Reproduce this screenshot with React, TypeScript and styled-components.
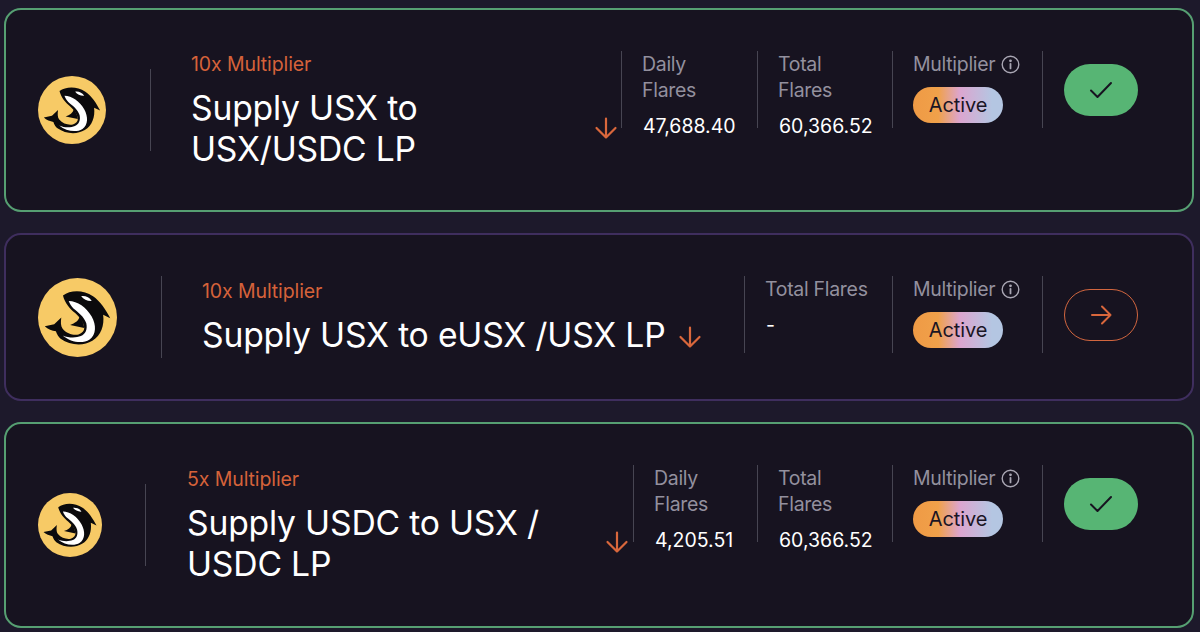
import React from "react";
import styled, { createGlobalStyle } from "styled-components";

const Global = createGlobalStyle`
  html, body { margin: 0; padding: 0; background: #1d192b; }
  body { font-family: Inter, "Liberation Sans", sans-serif; width: 1200px; height: 632px; overflow: hidden; }
`;

const Page = styled.div`
  display: flex;
  flex-direction: column;
  gap: 21px;
  padding: 8px 6px 0 4px;
`;

const Card = styled.section<{ $active: boolean; $height: number }>`
  box-sizing: border-box;
  height: ${(p) => p.$height}px;
  display: flex;
  align-items: center;
  background: #171320;
  border: 2px solid ${(p) => (p.$active ? "#569f72" : "#3f2e5e")};
  border-radius: 17px;
  padding-left: 32px;
`;

const LogoBox = styled.div<{ $width: number }>`
  flex: none;
  width: ${(p) => p.$width}px;
`;

const LogoSvg = styled.svg`
  display: block;
`;

const LeftRule = styled.div`
  flex: none;
  width: 1px;
  height: 82px;
  margin: 0 40px 0 43px;
  background: #474552;
`;

const TitleBlock = styled.div<{ $width: number; $nudge: number }>`
  flex: none;
  box-sizing: border-box;
  width: ${(p) => p.$width}px;
  padding-left: ${(p) => p.$nudge}px;
`;

const Tag = styled.div`
  color: #d5623a;
  font-size: 19.5px;
  line-height: 24px;
  letter-spacing: -0.1px;
  margin-bottom: 11px;
`;

const Title = styled.div`
  color: #fff;
  font-size: 33.7px;
  line-height: 41px;
  letter-spacing: -0.2px;
`;

const ArrowWrap = styled.div<{ $drop: number }>`
  flex: none;
  color: #d9673c;
  margin-top: ${(p) => p.$drop}px;
  display: flex;
`;

const Stats = styled.div`
  margin-left: auto;
  align-self: flex-start;
  margin-top: 41px;
  display: flex;
`;

const Cell = styled.div<{ $width: number }>`
  box-sizing: border-box;
  width: ${(p) => p.$width}px;
  height: 77px;
  border-left: 1px solid #474552;
  padding-left: 20px;
`;

const Label = styled.div`
  color: #93909e;
  font-size: 19.5px;
  line-height: 26px;
  letter-spacing: -0.3px;
  display: flex;
  align-items: center;
  gap: 6px;
  white-space: nowrap;
`;

const InfoIcon = styled.svg`
  color: #a9a6b3;
  flex: none;
`;

const Value = styled.div`
  color: #fff;
  font-size: 19.5px;
  line-height: 24px;
  margin-top: 11px;
  margin-left: 1px;
  white-space: nowrap;
`;

const Pill = styled.div`
  display: inline-flex;
  align-items: center;
  justify-content: center;
  width: 90px;
  height: 36px;
  margin-top: 10px;
  border-radius: 18px;
  color: #1a1524;
  font-size: 20px;
  letter-spacing: -0.1px;
  background: linear-gradient(90deg, #ef9a45 0%, #f0a14a 28%, #dca5cf 52%, #b4c6e2 88%);
`;

const Action = styled.div<{ $done: boolean }>`
  flex: none;
  align-self: flex-start;
  box-sizing: border-box;
  width: 74px;
  height: 52px;
  margin: 54px 54px 0 21px;
  border-radius: 26px;
  display: flex;
  align-items: center;
  justify-content: center;
  background: ${(p) => (p.$done ? "#57b574" : "transparent")};
  border: ${(p) => (p.$done ? "none" : "1.5px solid #d2663f")};
  color: ${(p) => (p.$done ? "#171320" : "#d9673c")};
`;

const ActionRule = styled.div`
  flex: none;
  align-self: flex-start;
  width: 1px;
  height: 77px;
  margin-top: 41px;
  background: #474552;
`;

const Orca = ({ size }: { size: number }) => (
  <LogoSvg width={size} height={size} viewBox="55 38 234 234">
    <circle cx="172" cy="155" r="117" fill="#f7ca66" />
    <path
      fill="#0b0a0c"
      d="M129 90 C150 74 188 72 218 92 C240 107 256 132 269 157 L248 147 C252 178 242 208 216 224 C190 240 150 238 122 218 C116 213 111 205 108 196 C97 194 84 190 75 181 L103 175 L124 155 C122 168 122 180 128 188 C140 203 160 208 175 205 C186 202 192 194 192 186 C190 170 180 155 165 142 C150 130 134 112 129 90 Z"
    />
    <path fill="#0b0a0c" d="M192 186 L150 177 C165 172 175 165 178 153 C186 162 190 172 192 186 Z" />
    <path
      fill="#fff"
      d="M146 106 C172 106 198 125 214 152 C228 178 228 205 208 220 C186 234 152 228 128 208 C146 216 168 216 182 210 C196 204 202 190 198 172 C192 152 172 138 160 128 C154 122 149 114 146 106 Z"
    />
    <path fill="#fff" d="M183 92 C195 90 208 96 214 106 C202 107 190 101 183 92 Z" />
  </LogoSvg>
);

const ArrowDown = () => (
  <svg width="24" height="24" viewBox="0 0 24 24" fill="none" stroke="currentColor" strokeWidth="2.2" strokeLinecap="round" strokeLinejoin="round">
    <path d="M12 2.5 V21.5 M2.5 12 L12 21.5 L21.5 12" />
  </svg>
);

const ArrowRight = () => (
  <svg width="24" height="24" viewBox="0 0 24 24" fill="none" stroke="currentColor" strokeWidth="2" strokeLinecap="round" strokeLinejoin="round">
    <path d="M3 12 H21.5 M13 3.5 L21.5 12 L13 20.5" />
  </svg>
);

const Check = () => (
  <svg width="24" height="24" viewBox="0 0 24 24" fill="none" stroke="currentColor" strokeWidth="2" strokeLinecap="round" strokeLinejoin="round">
    <path d="M2 12.5 L8.5 19 L22 5" />
  </svg>
);

const Info = () => (
  <InfoIcon width="19" height="19" viewBox="0 0 19 19" fill="none" stroke="currentColor" strokeWidth="1.4" strokeLinecap="round">
    <circle cx="9.5" cy="9.5" r="8.3" />
    <path d="M9.5 8.8 V13.4" strokeWidth="1.8" />
    <circle cx="9.5" cy="5.8" r="0.7" fill="currentColor" />
  </InfoIcon>
);

type Row = {
  tag: string;
  title: React.ReactNode;
  logo: number;
  logoBox: number;
  height: number;
  titleWidth: number;
  nudge: number;
  drop: number;
  done: boolean;
  stats: { label: React.ReactNode; value: string; width: number }[];
};

const rows: Row[] = [
  {
    tag: "10x Multiplier",
    title: <>Supply USX to<br />USX/USDC LP</>,
    logo: 68,
    logoBox: 69,
    height: 204,
    titleWidth: 403,
    nudge: 0,
    drop: 36,
    done: true,
    stats: [
      { label: <>Daily<br />Flares</>, value: "47,688.40", width: 136 },
      { label: <>Total<br />Flares</>, value: "60,366.52", width: 135 },
    ],
  },
  {
    tag: "10x Multiplier",
    title: "Supply USX to eUSX /USX LP",
    logo: 79,
    logoBox: 80,
    height: 168,
    titleWidth: 476,
    nudge: 0,
    drop: 40,
    done: false,
    stats: [{ label: "Total Flares", value: "-", width: 148 }],
  },
  {
    tag: "5x Multiplier",
    title: <>Supply USDC to USX /<br />USDC LP</>,
    logo: 64,
    logoBox: 64,
    height: 206,
    titleWidth: 419,
    nudge: 1,
    drop: 34,
    done: true,
    stats: [
      { label: <>Daily<br />Flares</>, value: "4,205.51", width: 124 },
      { label: <>Total<br />Flares</>, value: "60,366.52", width: 135 },
    ],
  },
];

export default function App() {
  return (
    <Page>
      <Global />
      {rows.map((r, i) => (
        <Card key={i} $active={r.done} $height={r.height}>
          <LogoBox $width={r.logoBox}><Orca size={r.logo} /></LogoBox>
          <LeftRule />
          <TitleBlock $width={r.titleWidth} $nudge={r.nudge}>
            <Tag>{r.tag}</Tag>
            <Title>{r.title}</Title>
          </TitleBlock>
          <ArrowWrap $drop={r.drop}><ArrowDown /></ArrowWrap>
          <Stats>
            {r.stats.map((s, j) => (
              <Cell key={j} $width={s.width}>
                <Label><span>{s.label}</span></Label>
                <Value>{s.value}</Value>
              </Cell>
            ))}
            <Cell $width={150}>
              <Label>Multiplier <Info /></Label>
              <Pill>Active</Pill>
            </Cell>
          </Stats>
          <ActionRule />
          <Action $done={r.done}>{r.done ? <Check /> : <ArrowRight />}</Action>
        </Card>
      ))}
    </Page>
  );
}
